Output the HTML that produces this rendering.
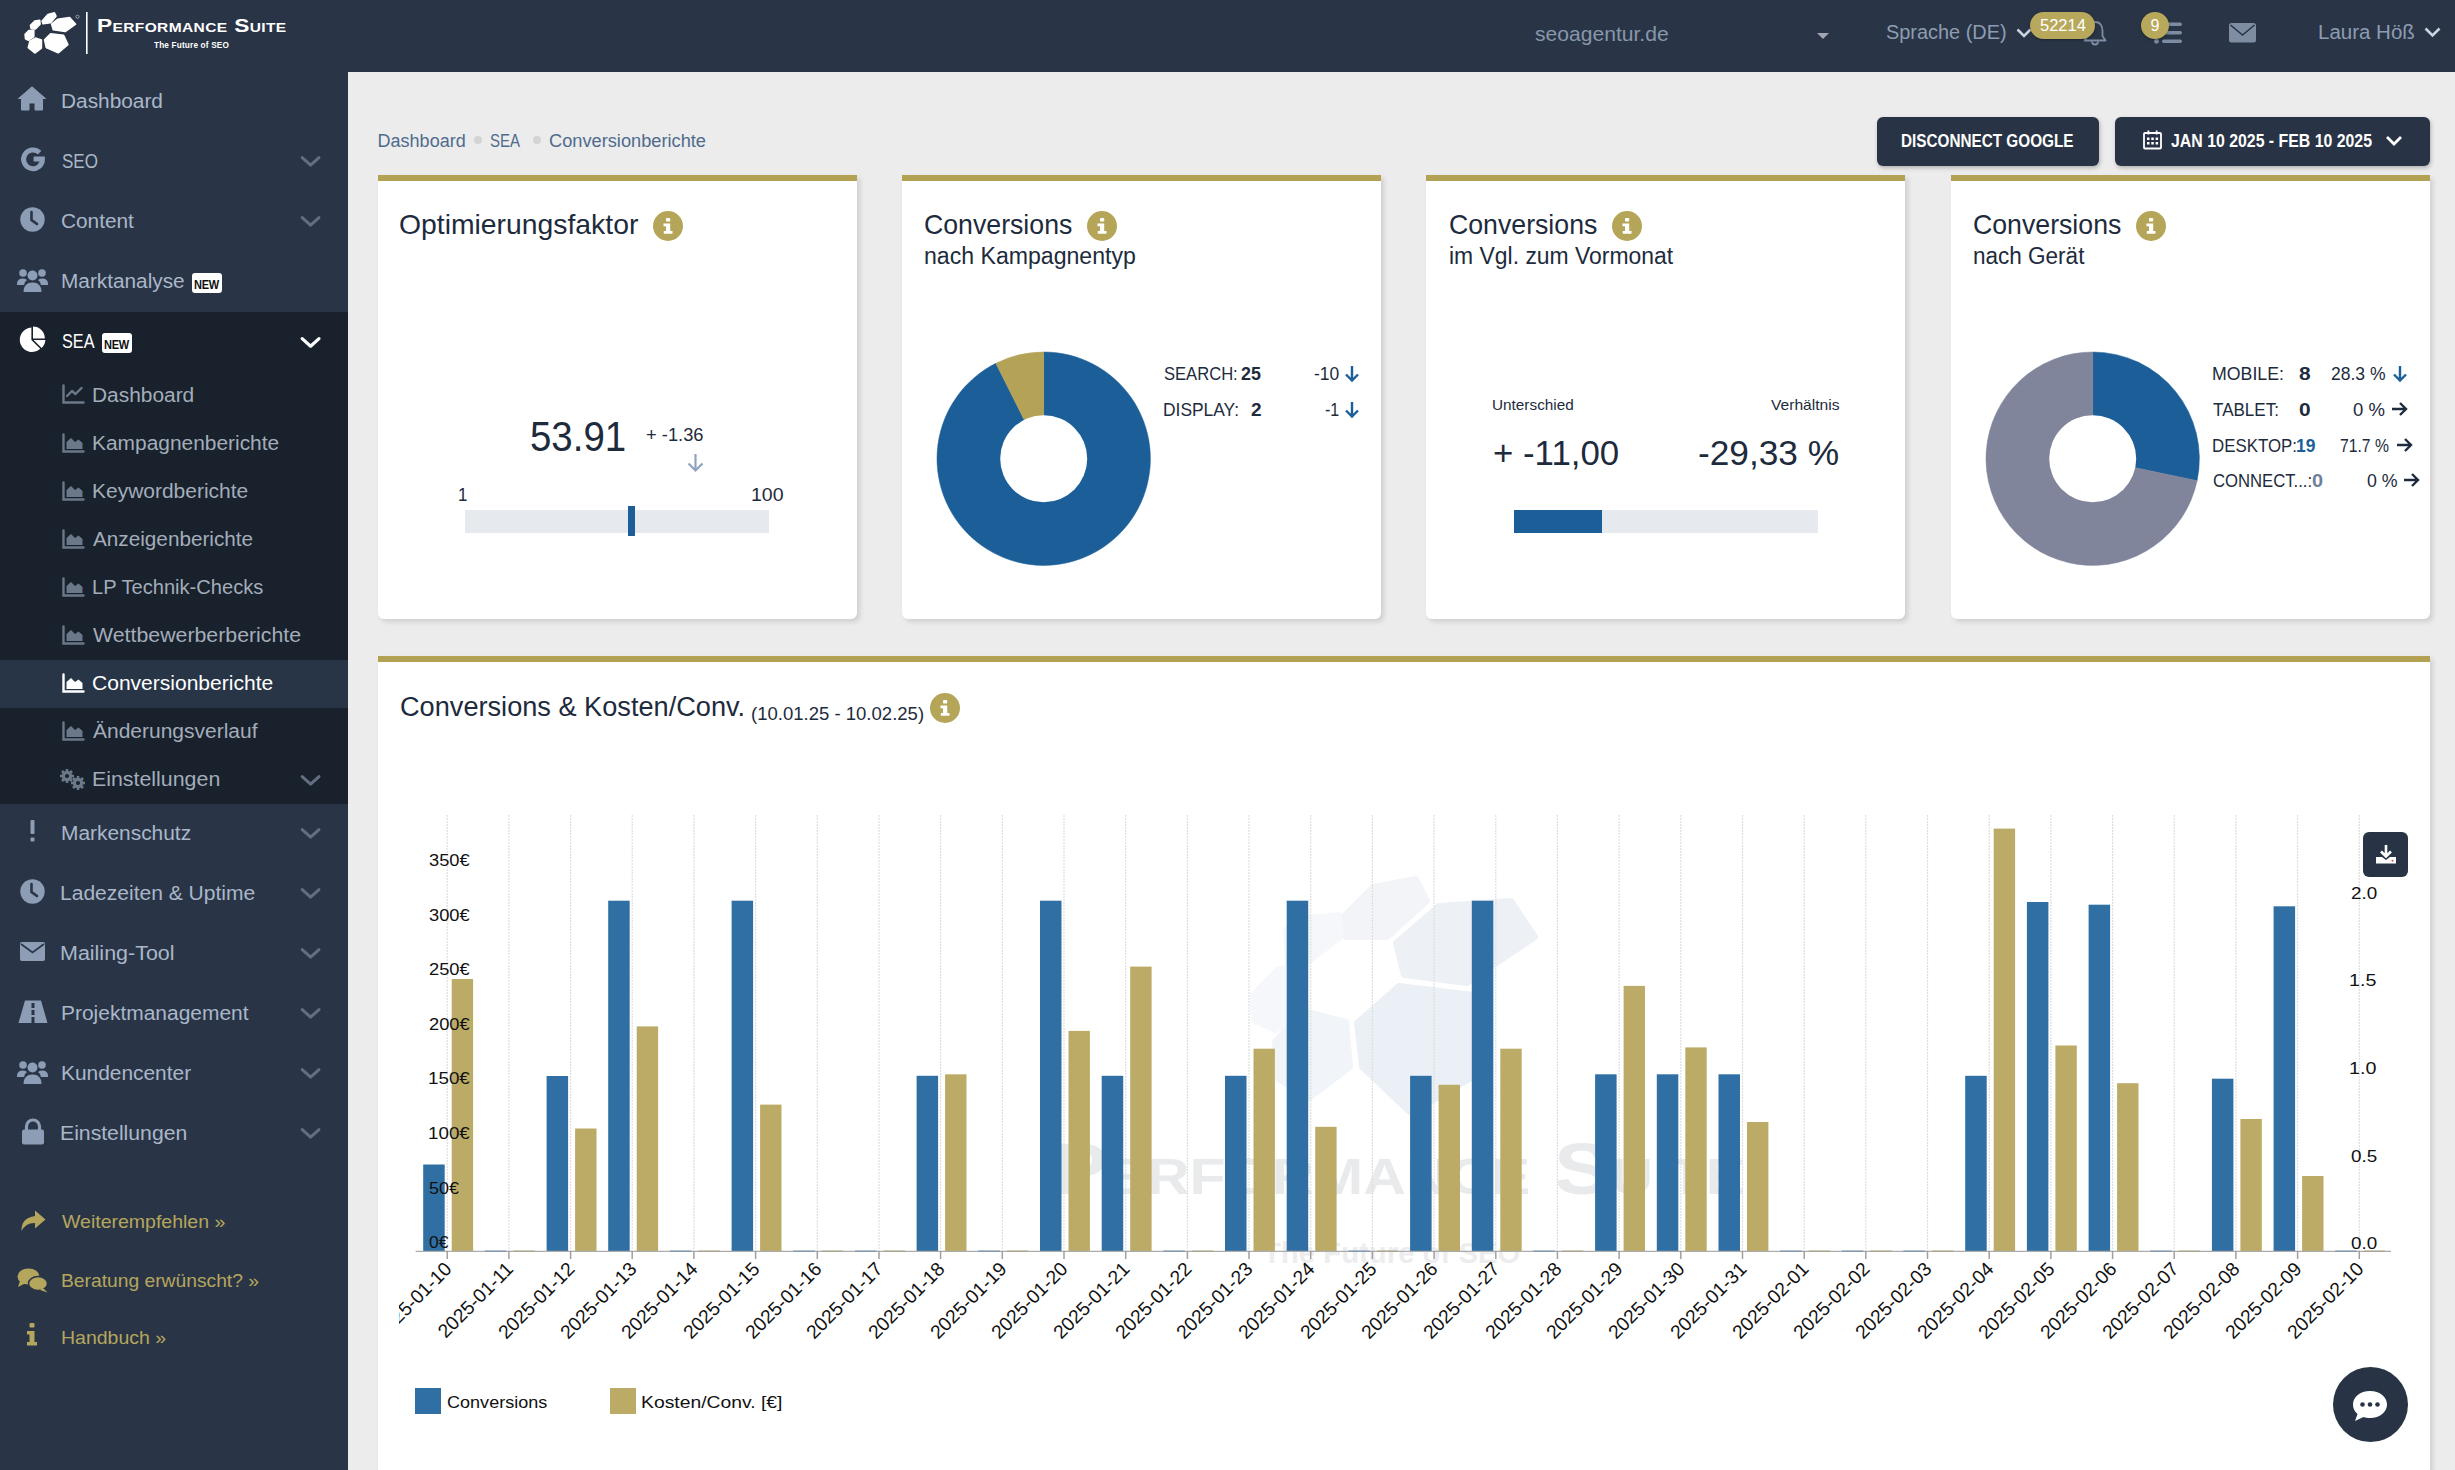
<!DOCTYPE html><html><head><meta charset="utf-8"><style>
*{margin:0;padding:0;box-sizing:border-box}
html,body{width:2455px;height:1470px;overflow:hidden;background:#ececec;font-family:"Liberation Sans",sans-serif}
.t{position:absolute;white-space:nowrap;line-height:1;transform-origin:0 50%}
.abs{position:absolute}
svg{position:absolute;overflow:visible}
</style></head><body>
<div class="abs" style="left:0;top:0;width:2455px;height:72px;background:#293546"></div><div class="abs" style="left:0;top:72px;width:348px;height:1398px;background:#293546"></div><div class="abs" style="left:0;top:312px;width:348px;height:492px;background:#18212c"></div><div class="abs" style="left:0;top:660px;width:348px;height:48px;background:#283546"></div><svg width="2455" height="72" style="left:0;top:0"><polygon points="42.2,21.0 47.9,14.5 54.4,12.9 56.0,16.2 50.6,22.7 43.0,23.8" fill="#fff" stroke="#fff" stroke-width="1.6" stroke-linejoin="round"/><polygon points="51.7,24.2 57.6,19.3 69.6,17.5 75.6,24.2 65.2,31.5 53.3,29.7" fill="#fff" stroke="#fff" stroke-width="1.6" stroke-linejoin="round"/><polygon points="30.5,25.3 34.8,21.0 39.7,20.2 40.1,24.2 35.4,28.9 31.0,28.1" fill="#fff" stroke="#fff" stroke-width="1.6" stroke-linejoin="round"/><polygon points="25.1,34.3 28.9,30.5 33.8,30.0 33.8,36.5 28.4,40.3 25.5,38.7" fill="#fff" stroke="#fff" stroke-width="1.6" stroke-linejoin="round"/><polygon points="28.3,47.6 29.9,41.1 35.4,38.1 41.4,40.0 41.4,48.1 34.8,53.0" fill="#fff" stroke="#fff" stroke-width="1.6" stroke-linejoin="round"/><polygon points="44.6,39.8 50.6,33.8 63.6,35.4 67.9,44.7 58.2,52.8 46.2,47.4" fill="#fff" stroke="#fff" stroke-width="1.6" stroke-linejoin="round"/><circle cx="77.5" cy="16.8" r="1.6" fill="none" stroke="#cfd5dd" stroke-width=".6"/><rect x="86" y="12" width="1.6" height="42" fill="#fff"/></svg><div id="t0" class="t " style="left:97.4px;top:15.8px;font-size:19px;transform:scaleX(1.1955);color:#fff;font-weight:bold;font-variant:small-caps;letter-spacing:0.3px">Performance Suite</div>
<div id="t1" class="t " style="left:154.1px;top:39.8px;font-size:9.5px;transform:scaleX(0.8641);color:#fff;font-weight:bold;letter-spacing:0.2px">The Future of SEO</div>
<div id="t2" class="t " style="left:1535.0px;top:23.2px;font-size:21px;transform:scaleX(1.0043);color:#8797ab">seoagentur.de</div>
<svg width="12" height="6" style="left:1817px;top:33px"><polygon points="0,0 12,0 6,6" fill="#a3a7ad"/></svg><div id="t3" class="t " style="left:1886.0px;top:22.1px;font-size:20px;transform:scaleX(0.9959);color:#8d9cb1">Sprache (DE)</div>
<svg width="16" height="10" style="left:2016px;top:27.5px"><polyline points="1.5,1.5 8,8 14.5,1.5" fill="none" stroke="#c9d3df" stroke-width="2.6"/></svg><svg width="26" height="28" style="left:2082px;top:19px"><path d="M13 3 C7.5 3 5.5 7.5 5.5 12 L5.5 17 L2.5 21.5 L23.5 21.5 L20.5 17 L20.5 12 C20.5 7.5 18.5 3 13 3 Z" fill="none" stroke="#7d8ca3" stroke-width="1.8" stroke-linejoin="round"/><path d="M10 22.5 A3 3 0 0 0 16 22.5" fill="none" stroke="#7d8ca3" stroke-width="1.8"/></svg><div class="abs" style="left:2030px;top:12px;width:65px;height:27px;border-radius:14px;background:#b8a85c;box-shadow:0 1px 3px rgba(0,0,0,.35)"></div><div id="t4" class="t " style="left:2039.5px;top:17.5px;font-size:16px;transform:scaleX(1.0315);color:#fff">52214</div>
<svg width="30" height="24" style="left:2153px;top:21px"><g fill="#7d8ca3"><rect x="9" y="1.5" width="20" height="3.6" rx="1.8"/><rect x="9" y="10" width="20" height="3.6" rx="1.8"/><rect x="9" y="18.5" width="20" height="3.6" rx="1.8"/><circle cx="3.5" cy="20.3" r="2.4"/></g></svg><div class="abs" style="left:2141px;top:12px;width:28px;height:27px;border-radius:50%;background:#b8a85c;box-shadow:0 1px 3px rgba(0,0,0,.35)"></div><div id="t5" class="t " style="left:2150.5px;top:17.5px;font-size:16px;color:#fff">9</div>
<svg width="28" height="20" style="left:2228.5px;top:22.5px"><rect x="0" y="0" width="27" height="19.5" rx="2.5" fill="#7f8da3"/><polyline points="1.5,2 13.5,12 25.5,2" fill="none" stroke="#293546" stroke-width="1.6"/></svg><div id="t6" class="t " style="left:2318.0px;top:22.1px;font-size:20px;transform:scaleX(1.0249);color:#8d9cb1">Laura Höß</div>
<svg width="18" height="11" style="left:2424px;top:27px"><polyline points="1.5,1.5 8.5,8.5 15.5,1.5" fill="none" stroke="#c9d3df" stroke-width="2.6"/></svg><div id="t7" class="t " style="left:61.0px;top:91.1px;font-size:20px;transform:scaleX(1.0416);color:#a9b7c9">Dashboard</div>
<div id="t8" class="t " style="left:62.0px;top:151.1px;font-size:20px;transform:scaleX(0.8517);color:#a9b7c9">SEO</div>
<svg width="22" height="13" style="left:300.3px;top:155.3px"><polyline points="2.2,2.6 10.6,10.2 19,2.6" fill="none" stroke="#636e80" stroke-width="3" stroke-linecap="round" stroke-linejoin="round"/></svg><div id="t9" class="t " style="left:61.0px;top:211.1px;font-size:20px;transform:scaleX(1.0404);color:#a9b7c9">Content</div>
<svg width="22" height="13" style="left:300.3px;top:215.3px"><polyline points="2.2,2.6 10.6,10.2 19,2.6" fill="none" stroke="#636e80" stroke-width="3" stroke-linecap="round" stroke-linejoin="round"/></svg><div id="t10" class="t " style="left:61.0px;top:271.1px;font-size:20px;transform:scaleX(1.0398);color:#a9b7c9">Marktanalyse</div>
<div class="abs" style="left:192px;top:273px;width:30px;height:20px;border-radius:3px;background:#fff"></div><div id="t11" class="t " style="left:193.7px;top:277.5px;font-size:13px;transform:scaleX(0.8493);color:#111;font-weight:bold;letter-spacing:-0.3px">NEW</div>
<div id="t12" class="t " style="left:62.0px;top:331.1px;font-size:20px;transform:scaleX(0.8112);color:#fff">SEA</div>
<div class="abs" style="left:102px;top:333px;width:30px;height:20px;border-radius:3px;background:#fff"></div><div id="t13" class="t " style="left:103.7px;top:337.5px;font-size:13px;transform:scaleX(0.8493);color:#111;font-weight:bold;letter-spacing:-0.3px">NEW</div>
<svg width="22" height="13" style="left:300.3px;top:336px"><polyline points="2.2,2.6 10.6,10.2 19,2.6" fill="none" stroke="#ffffff" stroke-width="3.2" stroke-linecap="round" stroke-linejoin="round"/></svg><div id="t14" class="t " style="left:91.8px;top:385.1px;font-size:20px;transform:scaleX(1.0447);color:#a3adba">Dashboard</div>
<div id="t15" class="t " style="left:91.8px;top:433.1px;font-size:20px;transform:scaleX(1.0456);color:#a3adba">Kampagnenberichte</div>
<div id="t16" class="t " style="left:91.8px;top:481.1px;font-size:20px;transform:scaleX(1.0484);color:#a3adba">Keywordberichte</div>
<div id="t17" class="t " style="left:92.8px;top:529.1px;font-size:20px;transform:scaleX(1.0361);color:#a3adba">Anzeigenberichte</div>
<div id="t18" class="t " style="left:91.8px;top:577.1px;font-size:20px;transform:scaleX(1.0048);color:#a3adba">LP Technik-Checks</div>
<div id="t19" class="t " style="left:92.8px;top:625.1px;font-size:20px;transform:scaleX(1.0658);color:#a3adba">Wettbewerberberichte</div>
<div id="t20" class="t " style="left:91.7px;top:673.1px;font-size:20px;transform:scaleX(1.0515);color:#fff">Conversionberichte</div>
<div id="t21" class="t " style="left:92.8px;top:721.1px;font-size:20px;transform:scaleX(1.0495);color:#a3adba">Änderungsverlauf</div>
<div id="t22" class="t " style="left:91.7px;top:769.1px;font-size:20px;transform:scaleX(1.0681);color:#a3adba">Einstellungen</div>
<svg width="22" height="13" style="left:300.3px;top:773.5px"><polyline points="2.2,2.6 10.6,10.2 19,2.6" fill="none" stroke="#636e80" stroke-width="3" stroke-linecap="round" stroke-linejoin="round"/></svg><div id="t23" class="t " style="left:60.5px;top:823.1px;font-size:20px;transform:scaleX(1.0450);color:#a9b7c9">Markenschutz</div>
<svg width="22" height="13" style="left:300.3px;top:827.3px"><polyline points="2.2,2.6 10.6,10.2 19,2.6" fill="none" stroke="#636e80" stroke-width="3" stroke-linecap="round" stroke-linejoin="round"/></svg><div id="t24" class="t " style="left:60.4px;top:883.1px;font-size:20px;transform:scaleX(1.0513);color:#a9b7c9">Ladezeiten &amp; Uptime</div>
<svg width="22" height="13" style="left:300.3px;top:887.3px"><polyline points="2.2,2.6 10.6,10.2 19,2.6" fill="none" stroke="#636e80" stroke-width="3" stroke-linecap="round" stroke-linejoin="round"/></svg><div id="t25" class="t " style="left:60.4px;top:943.1px;font-size:20px;transform:scaleX(1.0735);color:#a9b7c9">Mailing-Tool</div>
<svg width="22" height="13" style="left:300.3px;top:947.3px"><polyline points="2.2,2.6 10.6,10.2 19,2.6" fill="none" stroke="#636e80" stroke-width="3" stroke-linecap="round" stroke-linejoin="round"/></svg><div id="t26" class="t " style="left:60.5px;top:1003.1px;font-size:20px;transform:scaleX(1.0480);color:#a9b7c9">Projektmanagement</div>
<svg width="22" height="13" style="left:300.3px;top:1007.3px"><polyline points="2.2,2.6 10.6,10.2 19,2.6" fill="none" stroke="#636e80" stroke-width="3" stroke-linecap="round" stroke-linejoin="round"/></svg><div id="t27" class="t " style="left:60.5px;top:1063.1px;font-size:20px;transform:scaleX(1.0446);color:#a9b7c9">Kundencenter</div>
<svg width="22" height="13" style="left:300.3px;top:1067.3px"><polyline points="2.2,2.6 10.6,10.2 19,2.6" fill="none" stroke="#636e80" stroke-width="3" stroke-linecap="round" stroke-linejoin="round"/></svg><div id="t28" class="t " style="left:60.4px;top:1123.1px;font-size:20px;transform:scaleX(1.0596);color:#a9b7c9">Einstellungen</div>
<svg width="22" height="13" style="left:300.3px;top:1127.3px"><polyline points="2.2,2.6 10.6,10.2 19,2.6" fill="none" stroke="#636e80" stroke-width="3" stroke-linecap="round" stroke-linejoin="round"/></svg><div id="t29" class="t " style="left:61.5px;top:1212.3px;font-size:19px;transform:scaleX(1.0261);color:#b5a65d">Weiterempfehlen »</div>
<div id="t30" class="t " style="left:60.5px;top:1270.7px;font-size:19px;transform:scaleX(1.0132);color:#b5a65d">Beratung erwünscht? »</div>
<div id="t31" class="t " style="left:60.5px;top:1327.7px;font-size:19px;transform:scaleX(1.0258);color:#b5a65d">Handbuch »</div>
<svg width="30" height="26" style="left:18px;top:86px"><path d="M14 0.8 L27.5 12.5 L24.5 12.5 L24.5 24 L17 24 L17 17 L11 17 L11 24 L3.5 24 L3.5 12.5 L0.5 12.5 Z" fill="#8d9db5" stroke="#8d9db5" stroke-linejoin="round" stroke-width="1"/></svg><svg width="26" height="26" style="left:20.5px;top:147px"><path d="M18.6 5.6 A9.4 9.4 0 1 0 21.4 12 L12.6 12" fill="none" stroke="#8d9db5" stroke-width="5"/></svg><svg width="26" height="26" style="left:20px;top:207px"><circle cx="12.5" cy="12.5" r="12.2" fill="#8d9db5"/><polyline points="11.5,5 11.5,13 17,17" fill="none" stroke="#293546" stroke-width="2.6" stroke-linecap="round"/></svg><svg width="32" height="26" style="left:17px;top:268px"><g fill="#8d9db5"><circle cx="6" cy="5" r="3.8"/><circle cx="25" cy="5" r="3.8"/><circle cx="15.5" cy="7.5" r="5"/><path d="M0 16 Q0 10.5 6 10.5 Q9 10.5 10 12 Q7 14 7 17 L0 17 Z"/><path d="M31 16 Q31 10.5 25 10.5 Q22 10.5 21 12 Q24 14 24 17 L31 17 Z"/><path d="M6.5 24 Q6.5 14.5 15.5 14.5 Q24.5 14.5 24.5 24 Z"/></g></svg><svg width="28" height="28" style="left:19px;top:325px"><path d="M12.4 2.6 L12.4 15 L21.2 23.8 A12.2 12.2 0 1 1 12.4 2.6 Z" fill="#fff"/><path d="M14 1.6 A11.8 11.8 0 0 1 25.8 13.4 L14 13.4 Z" fill="#fff"/><path d="M14.6 15 L26.4 15 A12 12 0 0 1 22.6 23 Z" fill="#fff"/></svg><svg width="24" height="20" style="left:62px;top:385px"><path d="M1.5 0.5 L1.5 17.5 L21.5 17.5" fill="none" stroke="#6b7888" stroke-width="2.4" stroke-linecap="round"/><polyline points="5,11 10,6 13.5,9 19.5,3" fill="none" stroke="#6b7888" stroke-width="2.4" stroke-linecap="round" stroke-linejoin="round"/></svg><svg width="24" height="20" style="left:62px;top:433.5px"><path d="M1.5 0.5 L1.5 17.5 L21.5 17.5" fill="none" stroke="#6b7888" stroke-width="2.4" stroke-linecap="round"/><path d="M4.5 15 L4.5 8 L9 4 L13 8 L16.5 5.5 L20.5 9 L20.5 15 Z" fill="#6b7888"/></svg><svg width="24" height="20" style="left:62px;top:481.5px"><path d="M1.5 0.5 L1.5 17.5 L21.5 17.5" fill="none" stroke="#6b7888" stroke-width="2.4" stroke-linecap="round"/><path d="M4.5 15 L4.5 8 L9 4 L13 8 L16.5 5.5 L20.5 9 L20.5 15 Z" fill="#6b7888"/></svg><svg width="24" height="20" style="left:62px;top:529.5px"><path d="M1.5 0.5 L1.5 17.5 L21.5 17.5" fill="none" stroke="#6b7888" stroke-width="2.4" stroke-linecap="round"/><path d="M4.5 15 L4.5 8 L9 4 L13 8 L16.5 5.5 L20.5 9 L20.5 15 Z" fill="#6b7888"/></svg><svg width="24" height="20" style="left:62px;top:577.5px"><path d="M1.5 0.5 L1.5 17.5 L21.5 17.5" fill="none" stroke="#6b7888" stroke-width="2.4" stroke-linecap="round"/><path d="M4.5 15 L4.5 8 L9 4 L13 8 L16.5 5.5 L20.5 9 L20.5 15 Z" fill="#6b7888"/></svg><svg width="24" height="20" style="left:62px;top:625.5px"><path d="M1.5 0.5 L1.5 17.5 L21.5 17.5" fill="none" stroke="#6b7888" stroke-width="2.4" stroke-linecap="round"/><path d="M4.5 15 L4.5 8 L9 4 L13 8 L16.5 5.5 L20.5 9 L20.5 15 Z" fill="#6b7888"/></svg><svg width="24" height="20" style="left:62px;top:673.5px"><path d="M1.5 0.5 L1.5 17.5 L21.5 17.5" fill="none" stroke="#ffffff" stroke-width="2.4" stroke-linecap="round"/><path d="M4.5 15 L4.5 8 L9 4 L13 8 L16.5 5.5 L20.5 9 L20.5 15 Z" fill="#ffffff"/></svg><svg width="24" height="20" style="left:62px;top:721.5px"><path d="M1.5 0.5 L1.5 17.5 L21.5 17.5" fill="none" stroke="#6b7888" stroke-width="2.4" stroke-linecap="round"/><path d="M4.5 15 L4.5 8 L9 4 L13 8 L16.5 5.5 L20.5 9 L20.5 15 Z" fill="#6b7888"/></svg><svg width="28" height="22" style="left:59px;top:768px"><g fill="#6b7888"><circle cx="8" cy="8" r="5.2"/><circle cx="19" cy="15" r="5.2"/></g><g stroke="#6b7888" stroke-width="2.6"><line x1="8" y1="1" x2="8" y2="15"/><line x1="1" y1="8" x2="15" y2="8"/><line x1="3" y1="3" x2="13" y2="13"/><line x1="13" y1="3" x2="3" y2="13"/><line x1="19" y1="8" x2="19" y2="22"/><line x1="12" y1="15" x2="26" y2="15"/><line x1="14" y1="10" x2="24" y2="20"/><line x1="24" y1="10" x2="14" y2="20"/></g><circle cx="8" cy="8" r="2" fill="#19212b"/><circle cx="19" cy="15" r="2" fill="#19212b"/></svg><svg width="8" height="24" style="left:29px;top:820px"><rect x="1.5" y="0" width="4" height="14" rx="1" fill="#8d9db5"/><rect x="1.5" y="17.5" width="4" height="4" rx="1" fill="#8d9db5"/></svg><svg width="26" height="26" style="left:20px;top:879px"><circle cx="12.5" cy="12.5" r="12.2" fill="#8d9db5"/><polyline points="11.5,5 11.5,13 17,17" fill="none" stroke="#293546" stroke-width="2.6" stroke-linecap="round"/></svg><svg width="26" height="20" style="left:20px;top:942px"><rect x="0" y="0" width="25" height="19" rx="2" fill="#8d9db5"/><polyline points="1,2 12.5,10.5 24,2" fill="none" stroke="#293546" stroke-width="1.8"/></svg><svg width="30" height="24" style="left:18px;top:1000px"><path d="M7 0.5 L23 0.5 L29.5 23 L0.5 23 Z" fill="#8d9db5"/><rect x="13.5" y="3" width="3" height="5" fill="#293546"/><rect x="13.5" y="10" width="3" height="5" fill="#293546"/><rect x="13.5" y="17" width="3" height="6" fill="#293546"/></svg><svg width="32" height="26" style="left:17px;top:1060px"><g fill="#8d9db5"><circle cx="6" cy="5" r="3.8"/><circle cx="25" cy="5" r="3.8"/><circle cx="15.5" cy="7.5" r="5"/><path d="M0 16 Q0 10.5 6 10.5 Q9 10.5 10 12 Q7 14 7 17 L0 17 Z"/><path d="M31 16 Q31 10.5 25 10.5 Q22 10.5 21 12 Q24 14 24 17 L31 17 Z"/><path d="M6.5 24 Q6.5 14.5 15.5 14.5 Q24.5 14.5 24.5 24 Z"/></g></svg><svg width="24" height="26" style="left:21px;top:1119px"><path d="M5.5 11 L5.5 7.5 A6.5 6.5 0 0 1 18.5 7.5 L18.5 11" fill="none" stroke="#8d9db5" stroke-width="3.2"/><rect x="1" y="10.5" width="22" height="15" rx="2" fill="#8d9db5"/></svg><svg width="28" height="22" style="left:19px;top:1210px"><path d="M16 0.5 L26.5 9.5 L16 18.5 L16 13 Q7 12.5 2.5 21 Q2 8 16 6 Z" fill="#b5a65d"/></svg><svg width="32" height="26" style="left:17px;top:1268px"><ellipse cx="11.5" cy="8.5" rx="11" ry="8" fill="#b5a65d"/><path d="M3 13 L1 19 L9 15 Z" fill="#b5a65d"/><ellipse cx="21" cy="15.5" rx="9.5" ry="7" fill="#b5a65d" stroke="#293546" stroke-width="1.5"/><path d="M26 20 L30.5 24.5 L23 22 Z" fill="#b5a65d"/></svg><svg width="12" height="26" style="left:26px;top:1323px"><rect x="3.5" y="0" width="5" height="4.5" rx="1" fill="#b5a65d"/><path d="M1 8 L8.5 8 L8.5 19 L11 19 L11 22.5 L1 22.5 L1 19 L3.5 19 L3.5 11.5 L1 11.5 Z" fill="#b5a65d"/></svg><div id="t32" class="t " style="left:377.6px;top:132.2px;font-size:18px;color:#4f6b8c">Dashboard</div>
<div class="abs" style="left:474px;top:136px;width:8px;height:8px;border-radius:50%;background:#d4d4d4"></div><div id="t33" class="t " style="left:490.0px;top:132.2px;font-size:18px;transform:scaleX(0.8331);color:#4f6b8c">SEA</div>
<div class="abs" style="left:533px;top:136px;width:8px;height:8px;border-radius:50%;background:#d4d4d4"></div><div id="t34" class="t " style="left:549.4px;top:132.2px;font-size:18px;transform:scaleX(1.0124);color:#4f6b8c">Conversionberichte</div>
<div class="abs" style="left:1876.5px;top:116.5px;width:222px;height:49px;border-radius:6px;background:#283445;box-shadow:1px 2px 4px rgba(0,0,0,.25)"></div><div id="t35" class="t " style="left:1900.9px;top:132.2px;font-size:18px;transform:scaleX(0.8495);color:#fff;font-weight:bold">DISCONNECT GOOGLE</div>
<div class="abs" style="left:2114.5px;top:116.5px;width:315px;height:49px;border-radius:6px;background:#283445;box-shadow:1px 2px 4px rgba(0,0,0,.25)"></div><svg width="20" height="20" style="left:2143px;top:129.5px"><rect x="1" y="3" width="17" height="15.5" rx="1" fill="none" stroke="#fff" stroke-width="1.8"/><rect x="4.5" y="0.5" width="1.8" height="4" fill="#fff"/><rect x="12.8" y="0.5" width="1.8" height="4" fill="#fff"/><g fill="#fff"><rect x="4" y="7.5" width="2.5" height="2.5"/><rect x="8.3" y="7.5" width="2.5" height="2.5"/><rect x="12.6" y="7.5" width="2.5" height="2.5"/><rect x="4" y="12" width="2.5" height="2.5"/><rect x="8.3" y="12" width="2.5" height="2.5"/><rect x="12.6" y="12" width="2.5" height="2.5"/></g></svg><div id="t36" class="t " style="left:2171.4px;top:132.2px;font-size:18px;transform:scaleX(0.8811);color:#fff;font-weight:bold">JAN 10 2025 - FEB 10 2025</div>
<svg width="18" height="11" style="left:2385px;top:135px"><polyline points="2,2 9,9 16,2" fill="none" stroke="#fff" stroke-width="2.8"/></svg><div class="abs" style="left:378px;top:175px;width:479px;height:444px;background:#fff;border-top:6px solid #b3a254;border-radius:0 0 6px 6px;box-shadow:3px 3px 5px rgba(0,0,0,.12)"></div><div class="abs" style="left:902px;top:175px;width:479px;height:444px;background:#fff;border-top:6px solid #b3a254;border-radius:0 0 6px 6px;box-shadow:3px 3px 5px rgba(0,0,0,.12)"></div><div class="abs" style="left:1426px;top:175px;width:479px;height:444px;background:#fff;border-top:6px solid #b3a254;border-radius:0 0 6px 6px;box-shadow:3px 3px 5px rgba(0,0,0,.12)"></div><div class="abs" style="left:1951px;top:175px;width:479px;height:444px;background:#fff;border-top:6px solid #b3a254;border-radius:0 0 6px 6px;box-shadow:3px 3px 5px rgba(0,0,0,.12)"></div><div class="abs" style="left:378px;top:656px;width:2052px;height:900px;background:#fff;border-top:6px solid #b3a254;box-shadow:3px 3px 5px rgba(0,0,0,.12)"></div><div id="t37" class="t " style="left:399.3px;top:211.1px;font-size:28px;transform:scaleX(1.0118);color:#1d2b3c">Optimierungsfaktor</div>
<svg width="31" height="31" style="left:653px;top:210.7px"><circle cx="15" cy="15" r="15" fill="#b5a558"/><g fill="#fff"><rect x="13" y="7" width="4.2" height="3.6" rx=".8"/><path d="M10.5 12.5 L17.2 12.5 L17.2 20 L19.5 20 L19.5 22.8 L10.8 22.8 L10.8 20 L13 20 L13 15.3 L10.5 15.3 Z"/></g></svg><div id="t38" class="t " style="left:924.4px;top:211.1px;font-size:28px;transform:scaleX(0.9530);color:#1d2b3c">Conversions</div>
<div id="t39" class="t " style="left:924.4px;top:244.5px;font-size:23px;transform:scaleX(1.0038);color:#1d2b3c">nach Kampagnentyp</div>
<div id="t40" class="t " style="left:1448.7px;top:211.1px;font-size:28px;transform:scaleX(0.9530);color:#1d2b3c">Conversions</div>
<div id="t41" class="t " style="left:1448.7px;top:244.5px;font-size:23px;transform:scaleX(0.9961);color:#1d2b3c">im Vgl. zum Vormonat</div>
<div id="t42" class="t " style="left:1972.8px;top:211.1px;font-size:28px;transform:scaleX(0.9530);color:#1d2b3c">Conversions</div>
<div id="t43" class="t " style="left:1972.8px;top:244.5px;font-size:23px;transform:scaleX(0.9789);color:#1d2b3c">nach Gerät</div>
<svg width="31" height="31" style="left:1087px;top:210.7px"><circle cx="15" cy="15" r="15" fill="#b5a558"/><g fill="#fff"><rect x="13" y="7" width="4.2" height="3.6" rx=".8"/><path d="M10.5 12.5 L17.2 12.5 L17.2 20 L19.5 20 L19.5 22.8 L10.8 22.8 L10.8 20 L13 20 L13 15.3 L10.5 15.3 Z"/></g></svg><svg width="31" height="31" style="left:1611.5px;top:210.7px"><circle cx="15" cy="15" r="15" fill="#b5a558"/><g fill="#fff"><rect x="13" y="7" width="4.2" height="3.6" rx=".8"/><path d="M10.5 12.5 L17.2 12.5 L17.2 20 L19.5 20 L19.5 22.8 L10.8 22.8 L10.8 20 L13 20 L13 15.3 L10.5 15.3 Z"/></g></svg><svg width="31" height="31" style="left:2136px;top:210.7px"><circle cx="15" cy="15" r="15" fill="#b5a558"/><g fill="#fff"><rect x="13" y="7" width="4.2" height="3.6" rx=".8"/><path d="M10.5 12.5 L17.2 12.5 L17.2 20 L19.5 20 L19.5 22.8 L10.8 22.8 L10.8 20 L13 20 L13 15.3 L10.5 15.3 Z"/></g></svg><div id="t44" class="t " style="left:530.1px;top:416.0px;font-size:42px;transform:scaleX(0.9149);color:#1d2b3c">53.91</div>
<div id="t45" class="t " style="left:646.0px;top:424.6px;font-size:19px;transform:scaleX(0.9642);color:#1d2b3c">+ -1.36</div>
<svg width="20" height="20" style="left:686px;top:453px"><path d="M9.5 1 L9.5 17.5 M2.5 10.5 L9.5 17.5 L16.5 10.5" fill="none" stroke="#8fa3bd" stroke-width="2.2"/></svg><div id="t46" class="t " style="left:458.1px;top:484.6px;font-size:19px;transform:scaleX(0.8889);color:#1d2b3c">1</div>
<div id="t47" class="t " style="left:751.0px;top:484.6px;font-size:19px;transform:scaleX(1.0287);color:#1d2b3c">100</div>
<div class="abs" style="left:465px;top:510px;width:304px;height:23px;background:#e6eaee"></div><div class="abs" style="left:628px;top:506px;width:7px;height:30px;background:#1b5e98"></div><svg width="217.4" height="217.4" style="left:934.5999999999999px;top:350.3px"><path d="M108.7,108.7 L108.70,2.00 A106.7,106.7 0 1 1 60.81,13.35 Z" fill="#1b5e98" stroke="#1b5e98" stroke-width=".5"/><path d="M108.7,108.7 L60.81,13.35 A106.7,106.7 0 0 1 108.70,2.00 Z" fill="#b4a356" stroke="#b4a356" stroke-width=".5"/><circle cx="108.7" cy="108.7" r="43.5" fill="#fff"/></svg><svg width="217.4" height="217.4" style="left:1983.7px;top:350.3px"><path d="M108.7,108.7 L108.70,2.00 A106.7,106.7 0 0 1 213.11,130.67 Z" fill="#1b5e98" stroke="#1b5e98" stroke-width=".5"/><path d="M108.7,108.7 L213.11,130.67 A106.7,106.7 0 1 1 108.70,2.00 Z" fill="#80859b" stroke="#80859b" stroke-width=".5"/><circle cx="108.7" cy="108.7" r="43.5" fill="#fff"/></svg><div id="t48" class="t " style="left:1163.5px;top:364.2px;font-size:19px;transform:scaleX(0.8728);color:#1d2b3c">SEARCH:</div>
<div id="t49" class="t " style="left:1240.7px;top:364.2px;font-size:19px;transform:scaleX(0.9413);color:#1d2b3c;font-weight:bold">25</div>
<div id="t50" class="t " style="left:1314.0px;top:364.2px;font-size:19px;transform:scaleX(0.9184);color:#1d2b3c">-10</div>
<svg width="18" height="18" style="left:1343.5px;top:365px"><path d="M8 1 L8 15.5 M2 9.5 L8 15.5 L14 9.5" fill="none" stroke="#1b5e98" stroke-width="2.4"/></svg><div id="t51" class="t " style="left:1162.6px;top:400.1px;font-size:19px;transform:scaleX(0.9158);color:#1d2b3c">DISPLAY:</div>
<div id="t52" class="t " style="left:1251.0px;top:400.1px;font-size:19px;color:#1d2b3c;font-weight:bold">2</div>
<div id="t53" class="t " style="left:1325.0px;top:400.1px;font-size:19px;transform:scaleX(0.8391);color:#1d2b3c">-1</div>
<svg width="18" height="18" style="left:1343.5px;top:401px"><path d="M8 1 L8 15.5 M2 9.5 L8 15.5 L14 9.5" fill="none" stroke="#1b5e98" stroke-width="2.4"/></svg><div id="t54" class="t " style="left:1491.9px;top:396.7px;font-size:15px;transform:scaleX(1.0216);color:#1d2b3c">Unterschied</div>
<div id="t55" class="t " style="left:1771.4px;top:396.7px;font-size:15px;transform:scaleX(1.0402);color:#1d2b3c">Verhältnis</div>
<div id="t56" class="t " style="left:1493.0px;top:434.5px;font-size:35px;transform:scaleX(0.9949);color:#1d2b3c">+ -11,00</div>
<div id="t57" class="t " style="left:1698.4px;top:434.5px;font-size:35px;transform:scaleX(1.0075);color:#1d2b3c">-29,33 %</div>
<div class="abs" style="left:1514px;top:510px;width:304px;height:23px;background:#e6eaee"></div><div class="abs" style="left:1514px;top:510px;width:88px;height:23px;background:#1b5e98"></div><div id="t58" class="t " style="left:2211.6px;top:364.2px;font-size:19px;transform:scaleX(0.9332);color:#1d2b3c">MOBILE:</div>
<div id="t59" class="t " style="left:2298.6px;top:364.2px;font-size:19px;transform:scaleX(1.1000);color:#1d2b3c;font-weight:bold">8</div>
<div id="t60" class="t " style="left:2331.4px;top:364.2px;font-size:19px;transform:scaleX(0.9214);color:#1d2b3c">28.3 %</div>
<svg width="18" height="18" style="left:2392.4px;top:365.3px"><path d="M8 1 L8 15.5 M2 9.5 L8 15.5 L14 9.5" fill="none" stroke="#1b5e98" stroke-width="2.4"/></svg><div id="t61" class="t " style="left:2212.5px;top:400.1px;font-size:19px;transform:scaleX(0.8965);color:#1d2b3c">TABLET:</div>
<div id="t62" class="t " style="left:2299.0px;top:400.1px;font-size:19px;transform:scaleX(1.1000);color:#1d2b3c;font-weight:bold">0</div>
<div id="t63" class="t " style="left:2353.0px;top:400.1px;font-size:19px;transform:scaleX(0.9743);color:#1d2b3c">0 %</div>
<svg width="18" height="18" style="left:2391px;top:401.2px"><path d="M1 8 L15 8 M9 2 L15 8 L9 14" fill="none" stroke="#1d2b3c" stroke-width="2.4"/></svg><div id="t64" class="t " style="left:2211.6px;top:435.5px;font-size:19px;transform:scaleX(0.8881);color:#1d2b3c">DESKTOP:</div>
<div id="t65" class="t " style="left:2296.1px;top:435.5px;font-size:19px;transform:scaleX(0.9199);color:#1b5e98;font-weight:bold">19</div>
<div id="t66" class="t " style="left:2339.9px;top:435.5px;font-size:19px;transform:scaleX(0.8269);color:#1d2b3c">71.7 %</div>
<svg width="18" height="18" style="left:2396px;top:436.6px"><path d="M1 8 L15 8 M9 2 L15 8 L9 14" fill="none" stroke="#1d2b3c" stroke-width="2.4"/></svg><div id="t67" class="t " style="left:2212.5px;top:470.5px;font-size:19px;transform:scaleX(0.8776);color:#1d2b3c">CONNECT...:</div>
<div id="t68" class="t " style="left:2311.7px;top:470.5px;font-size:19px;transform:scaleX(1.0500);color:#6d8099;font-weight:bold">0</div>
<div id="t69" class="t " style="left:2366.5px;top:470.5px;font-size:19px;transform:scaleX(0.9347);color:#1d2b3c">0 %</div>
<svg width="18" height="18" style="left:2403.4px;top:471.6px"><path d="M1 8 L15 8 M9 2 L15 8 L9 14" fill="none" stroke="#1d2b3c" stroke-width="2.4"/></svg><div id="t70" class="t " style="left:399.6px;top:693.8px;font-size:27px;transform:scaleX(1.0057);color:#1d2b3c">Conversions &amp; Kosten/Conv.</div>
<div id="t71" class="t " style="left:750.5px;top:705.1px;font-size:18px;transform:scaleX(1.0294);color:#1d2b3c">(10.01.25 - 10.02.25)</div>
<svg width="31" height="31" style="left:930px;top:693px"><circle cx="15" cy="15" r="15" fill="#b5a558"/><g fill="#fff"><rect x="13" y="7" width="4.2" height="3.6" rx=".8"/><path d="M10.5 12.5 L17.2 12.5 L17.2 20 L19.5 20 L19.5 22.8 L10.8 22.8 L10.8 20 L13 20 L13 15.3 L10.5 15.3 Z"/></g></svg><svg width="2455" height="1470" style="left:0;top:0"><polygon points="1345,915 1373,887 1416,879 1427,901 1387,937 1346,937" fill="#f2f4f8" stroke="#f2f4f8" stroke-width="6" stroke-linejoin="round"/><polygon points="1396,943 1439,906 1511,901 1535,937 1467,983 1404,975" fill="#edf1f6" stroke="#edf1f6" stroke-width="6" stroke-linejoin="round"/><polygon points="1286,930 1310,918 1339,915 1340,937 1310,960 1288,965" fill="#f5f7fa" stroke="#f5f7fa" stroke-width="6" stroke-linejoin="round"/><polygon points="1253,995 1277,970 1298,965 1300,1012 1275,1030 1254,1020" fill="#f5f7fa" stroke="#f5f7fa" stroke-width="6" stroke-linejoin="round"/><polygon points="1275,1042 1303,1011 1346,1022 1350,1067 1309,1098 1278,1079" fill="#f1f4f8" stroke="#f1f4f8" stroke-width="6" stroke-linejoin="round"/><polygon points="1357,1023 1399,986 1473,995 1480,1073 1411,1113 1362,1067" fill="#ebeff6" stroke="#ebeff6" stroke-width="6" stroke-linejoin="round"/></svg><div id="t72" class="t " style="left:1050.8px;top:1132.8px;font-size:72px;transform:scaleX(1.1797);color:#e9eaec;font-weight:bold;font-variant:small-caps">Performance Suite</div>
<div id="t73" class="t " style="left:1263.0px;top:1237.6px;font-size:30px;transform:scaleX(0.9772);color:#ededef;font-weight:bold">The Future of SEO</div>
<svg width="2455" height="1470" style="left:0;top:0"><line x1="447.2" y1="815" x2="447.2" y2="1251" stroke="#dedede" stroke-width="1.2" stroke-dasharray="2 1"/><line x1="508.9" y1="815" x2="508.9" y2="1251" stroke="#dedede" stroke-width="1.2" stroke-dasharray="2 1"/><line x1="570.6" y1="815" x2="570.6" y2="1251" stroke="#dedede" stroke-width="1.2" stroke-dasharray="2 1"/><line x1="632.2" y1="815" x2="632.2" y2="1251" stroke="#dedede" stroke-width="1.2" stroke-dasharray="2 1"/><line x1="693.9" y1="815" x2="693.9" y2="1251" stroke="#dedede" stroke-width="1.2" stroke-dasharray="2 1"/><line x1="755.6" y1="815" x2="755.6" y2="1251" stroke="#dedede" stroke-width="1.2" stroke-dasharray="2 1"/><line x1="817.3" y1="815" x2="817.3" y2="1251" stroke="#dedede" stroke-width="1.2" stroke-dasharray="2 1"/><line x1="879.0" y1="815" x2="879.0" y2="1251" stroke="#dedede" stroke-width="1.2" stroke-dasharray="2 1"/><line x1="940.6" y1="815" x2="940.6" y2="1251" stroke="#dedede" stroke-width="1.2" stroke-dasharray="2 1"/><line x1="1002.3" y1="815" x2="1002.3" y2="1251" stroke="#dedede" stroke-width="1.2" stroke-dasharray="2 1"/><line x1="1064.0" y1="815" x2="1064.0" y2="1251" stroke="#dedede" stroke-width="1.2" stroke-dasharray="2 1"/><line x1="1125.7" y1="815" x2="1125.7" y2="1251" stroke="#dedede" stroke-width="1.2" stroke-dasharray="2 1"/><line x1="1187.4" y1="815" x2="1187.4" y2="1251" stroke="#dedede" stroke-width="1.2" stroke-dasharray="2 1"/><line x1="1249.0" y1="815" x2="1249.0" y2="1251" stroke="#dedede" stroke-width="1.2" stroke-dasharray="2 1"/><line x1="1310.7" y1="815" x2="1310.7" y2="1251" stroke="#dedede" stroke-width="1.2" stroke-dasharray="2 1"/><line x1="1372.4" y1="815" x2="1372.4" y2="1251" stroke="#dedede" stroke-width="1.2" stroke-dasharray="2 1"/><line x1="1434.1" y1="815" x2="1434.1" y2="1251" stroke="#dedede" stroke-width="1.2" stroke-dasharray="2 1"/><line x1="1495.8" y1="815" x2="1495.8" y2="1251" stroke="#dedede" stroke-width="1.2" stroke-dasharray="2 1"/><line x1="1557.4" y1="815" x2="1557.4" y2="1251" stroke="#dedede" stroke-width="1.2" stroke-dasharray="2 1"/><line x1="1619.1" y1="815" x2="1619.1" y2="1251" stroke="#dedede" stroke-width="1.2" stroke-dasharray="2 1"/><line x1="1680.8" y1="815" x2="1680.8" y2="1251" stroke="#dedede" stroke-width="1.2" stroke-dasharray="2 1"/><line x1="1742.5" y1="815" x2="1742.5" y2="1251" stroke="#dedede" stroke-width="1.2" stroke-dasharray="2 1"/><line x1="1804.2" y1="815" x2="1804.2" y2="1251" stroke="#dedede" stroke-width="1.2" stroke-dasharray="2 1"/><line x1="1865.8" y1="815" x2="1865.8" y2="1251" stroke="#dedede" stroke-width="1.2" stroke-dasharray="2 1"/><line x1="1927.5" y1="815" x2="1927.5" y2="1251" stroke="#dedede" stroke-width="1.2" stroke-dasharray="2 1"/><line x1="1989.2" y1="815" x2="1989.2" y2="1251" stroke="#dedede" stroke-width="1.2" stroke-dasharray="2 1"/><line x1="2050.9" y1="815" x2="2050.9" y2="1251" stroke="#dedede" stroke-width="1.2" stroke-dasharray="2 1"/><line x1="2112.6" y1="815" x2="2112.6" y2="1251" stroke="#dedede" stroke-width="1.2" stroke-dasharray="2 1"/><line x1="2174.2" y1="815" x2="2174.2" y2="1251" stroke="#dedede" stroke-width="1.2" stroke-dasharray="2 1"/><line x1="2235.9" y1="815" x2="2235.9" y2="1251" stroke="#dedede" stroke-width="1.2" stroke-dasharray="2 1"/><line x1="2297.6" y1="815" x2="2297.6" y2="1251" stroke="#dedede" stroke-width="1.2" stroke-dasharray="2 1"/><line x1="2359.3" y1="815" x2="2359.3" y2="1251" stroke="#dedede" stroke-width="1.2" stroke-dasharray="2 1"/><rect x="423.2" y="1164.5" width="21.5" height="86.5" fill="#306fa3"/><rect x="451.7" y="979" width="21.4" height="272.0" fill="#bcab67"/><rect x="546.6" y="1076" width="21.5" height="175.0" fill="#306fa3"/><rect x="575.1" y="1128.5" width="21.4" height="122.5" fill="#bcab67"/><rect x="608.2" y="900.7" width="21.5" height="350.3" fill="#306fa3"/><rect x="636.7" y="1026.4" width="21.4" height="224.6" fill="#bcab67"/><rect x="731.6" y="900.7" width="21.5" height="350.3" fill="#306fa3"/><rect x="760.1" y="1104.6" width="21.4" height="146.4" fill="#bcab67"/><rect x="916.6" y="1075.8" width="21.5" height="175.2" fill="#306fa3"/><rect x="945.1" y="1074.3" width="21.4" height="176.7" fill="#bcab67"/><rect x="1040.0" y="900.7" width="21.5" height="350.3" fill="#306fa3"/><rect x="1068.5" y="1030.9" width="21.4" height="220.1" fill="#bcab67"/><rect x="1101.7" y="1075.8" width="21.5" height="175.2" fill="#306fa3"/><rect x="1130.2" y="966.6" width="21.4" height="284.4" fill="#bcab67"/><rect x="1225.0" y="1075.8" width="21.5" height="175.2" fill="#306fa3"/><rect x="1253.5" y="1048.7" width="21.4" height="202.3" fill="#bcab67"/><rect x="1286.7" y="900.7" width="21.5" height="350.3" fill="#306fa3"/><rect x="1315.2" y="1126.8" width="21.4" height="124.2" fill="#bcab67"/><rect x="1410.1" y="1075.8" width="21.5" height="175.2" fill="#306fa3"/><rect x="1438.6" y="1084.8" width="21.4" height="166.2" fill="#bcab67"/><rect x="1471.8" y="900.7" width="21.5" height="350.3" fill="#306fa3"/><rect x="1500.3" y="1048.7" width="21.4" height="202.3" fill="#bcab67"/><rect x="1595.1" y="1074.3" width="21.5" height="176.7" fill="#306fa3"/><rect x="1623.6" y="985.9" width="21.4" height="265.1" fill="#bcab67"/><rect x="1656.8" y="1074.3" width="21.5" height="176.7" fill="#306fa3"/><rect x="1685.3" y="1047.4" width="21.4" height="203.6" fill="#bcab67"/><rect x="1718.5" y="1074.3" width="21.5" height="176.7" fill="#306fa3"/><rect x="1747.0" y="1122" width="21.4" height="129.0" fill="#bcab67"/><rect x="1965.2" y="1075.8" width="21.5" height="175.2" fill="#306fa3"/><rect x="1993.7" y="828.6" width="21.4" height="422.4" fill="#bcab67"/><rect x="2026.9" y="902" width="21.5" height="349.0" fill="#306fa3"/><rect x="2055.4" y="1045.5" width="21.4" height="205.5" fill="#bcab67"/><rect x="2088.6" y="904.7" width="21.5" height="346.3" fill="#306fa3"/><rect x="2117.1" y="1083.2" width="21.4" height="167.8" fill="#bcab67"/><rect x="2211.9" y="1078.7" width="21.5" height="172.3" fill="#306fa3"/><rect x="2240.4" y="1119" width="21.4" height="132.0" fill="#bcab67"/><rect x="2273.6" y="906.3" width="21.5" height="344.7" fill="#306fa3"/><rect x="2302.1" y="1176" width="21.4" height="75.0" fill="#bcab67"/><line x1="415.6" y1="1251.4" x2="2391" y2="1251.4" stroke="#acacac" stroke-width="1.3"/><rect x="484.9" y="1250.5" width="21.5" height="1.3" fill="#7d95ad"/><rect x="513.4" y="1250.5" width="21.4" height="1.3" fill="#aca68d"/><rect x="669.9" y="1250.5" width="21.5" height="1.3" fill="#7d95ad"/><rect x="698.4" y="1250.5" width="21.4" height="1.3" fill="#aca68d"/><rect x="793.3" y="1250.5" width="21.5" height="1.3" fill="#7d95ad"/><rect x="821.8" y="1250.5" width="21.4" height="1.3" fill="#aca68d"/><rect x="855.0" y="1250.5" width="21.5" height="1.3" fill="#7d95ad"/><rect x="883.5" y="1250.5" width="21.4" height="1.3" fill="#aca68d"/><rect x="978.3" y="1250.5" width="21.5" height="1.3" fill="#7d95ad"/><rect x="1006.8" y="1250.5" width="21.4" height="1.3" fill="#aca68d"/><rect x="1163.4" y="1250.5" width="21.5" height="1.3" fill="#7d95ad"/><rect x="1191.9" y="1250.5" width="21.4" height="1.3" fill="#aca68d"/><rect x="1348.4" y="1250.5" width="21.5" height="1.3" fill="#7d95ad"/><rect x="1376.9" y="1250.5" width="21.4" height="1.3" fill="#aca68d"/><rect x="1533.4" y="1250.5" width="21.5" height="1.3" fill="#7d95ad"/><rect x="1561.9" y="1250.5" width="21.4" height="1.3" fill="#aca68d"/><rect x="1780.2" y="1250.5" width="21.5" height="1.3" fill="#7d95ad"/><rect x="1808.7" y="1250.5" width="21.4" height="1.3" fill="#aca68d"/><rect x="1841.8" y="1250.5" width="21.5" height="1.3" fill="#7d95ad"/><rect x="1870.3" y="1250.5" width="21.4" height="1.3" fill="#aca68d"/><rect x="1903.5" y="1250.5" width="21.5" height="1.3" fill="#7d95ad"/><rect x="1932.0" y="1250.5" width="21.4" height="1.3" fill="#aca68d"/><rect x="2150.2" y="1250.5" width="21.5" height="1.3" fill="#7d95ad"/><rect x="2178.7" y="1250.5" width="21.4" height="1.3" fill="#aca68d"/><rect x="2335.3" y="1250.5" width="21.5" height="1.3" fill="#7d95ad"/><rect x="2363.8" y="1250.5" width="21.4" height="1.3" fill="#aca68d"/><line x1="447.2" y1="1251" x2="447.2" y2="1259" stroke="#a0a0a0" stroke-width="1.5"/><line x1="508.9" y1="1251" x2="508.9" y2="1259" stroke="#a0a0a0" stroke-width="1.5"/><line x1="570.6" y1="1251" x2="570.6" y2="1259" stroke="#a0a0a0" stroke-width="1.5"/><line x1="632.2" y1="1251" x2="632.2" y2="1259" stroke="#a0a0a0" stroke-width="1.5"/><line x1="693.9" y1="1251" x2="693.9" y2="1259" stroke="#a0a0a0" stroke-width="1.5"/><line x1="755.6" y1="1251" x2="755.6" y2="1259" stroke="#a0a0a0" stroke-width="1.5"/><line x1="817.3" y1="1251" x2="817.3" y2="1259" stroke="#a0a0a0" stroke-width="1.5"/><line x1="879.0" y1="1251" x2="879.0" y2="1259" stroke="#a0a0a0" stroke-width="1.5"/><line x1="940.6" y1="1251" x2="940.6" y2="1259" stroke="#a0a0a0" stroke-width="1.5"/><line x1="1002.3" y1="1251" x2="1002.3" y2="1259" stroke="#a0a0a0" stroke-width="1.5"/><line x1="1064.0" y1="1251" x2="1064.0" y2="1259" stroke="#a0a0a0" stroke-width="1.5"/><line x1="1125.7" y1="1251" x2="1125.7" y2="1259" stroke="#a0a0a0" stroke-width="1.5"/><line x1="1187.4" y1="1251" x2="1187.4" y2="1259" stroke="#a0a0a0" stroke-width="1.5"/><line x1="1249.0" y1="1251" x2="1249.0" y2="1259" stroke="#a0a0a0" stroke-width="1.5"/><line x1="1310.7" y1="1251" x2="1310.7" y2="1259" stroke="#a0a0a0" stroke-width="1.5"/><line x1="1372.4" y1="1251" x2="1372.4" y2="1259" stroke="#a0a0a0" stroke-width="1.5"/><line x1="1434.1" y1="1251" x2="1434.1" y2="1259" stroke="#a0a0a0" stroke-width="1.5"/><line x1="1495.8" y1="1251" x2="1495.8" y2="1259" stroke="#a0a0a0" stroke-width="1.5"/><line x1="1557.4" y1="1251" x2="1557.4" y2="1259" stroke="#a0a0a0" stroke-width="1.5"/><line x1="1619.1" y1="1251" x2="1619.1" y2="1259" stroke="#a0a0a0" stroke-width="1.5"/><line x1="1680.8" y1="1251" x2="1680.8" y2="1259" stroke="#a0a0a0" stroke-width="1.5"/><line x1="1742.5" y1="1251" x2="1742.5" y2="1259" stroke="#a0a0a0" stroke-width="1.5"/><line x1="1804.2" y1="1251" x2="1804.2" y2="1259" stroke="#a0a0a0" stroke-width="1.5"/><line x1="1865.8" y1="1251" x2="1865.8" y2="1259" stroke="#a0a0a0" stroke-width="1.5"/><line x1="1927.5" y1="1251" x2="1927.5" y2="1259" stroke="#a0a0a0" stroke-width="1.5"/><line x1="1989.2" y1="1251" x2="1989.2" y2="1259" stroke="#a0a0a0" stroke-width="1.5"/><line x1="2050.9" y1="1251" x2="2050.9" y2="1259" stroke="#a0a0a0" stroke-width="1.5"/><line x1="2112.6" y1="1251" x2="2112.6" y2="1259" stroke="#a0a0a0" stroke-width="1.5"/><line x1="2174.2" y1="1251" x2="2174.2" y2="1259" stroke="#a0a0a0" stroke-width="1.5"/><line x1="2235.9" y1="1251" x2="2235.9" y2="1259" stroke="#a0a0a0" stroke-width="1.5"/><line x1="2297.6" y1="1251" x2="2297.6" y2="1259" stroke="#a0a0a0" stroke-width="1.5"/><line x1="2359.3" y1="1251" x2="2359.3" y2="1259" stroke="#a0a0a0" stroke-width="1.5"/></svg><div id="t74" class="t " style="left:429.0px;top:1234.2px;font-size:17px;transform:scaleX(1.0280);color:#111111">0€</div>
<div id="t75" class="t " style="left:429.0px;top:1179.6px;font-size:17px;transform:scaleX(1.0585);color:#111111">50€</div>
<div id="t76" class="t " style="left:427.9px;top:1125.0px;font-size:17px;transform:scaleX(1.1053);color:#111111">100€</div>
<div id="t77" class="t " style="left:427.9px;top:1070.4px;font-size:17px;transform:scaleX(1.1053);color:#111111">150€</div>
<div id="t78" class="t " style="left:429.0px;top:1015.8px;font-size:17px;transform:scaleX(1.0765);color:#111111">200€</div>
<div id="t79" class="t " style="left:429.0px;top:961.2px;font-size:17px;transform:scaleX(1.0765);color:#111111">250€</div>
<div id="t80" class="t " style="left:429.0px;top:906.6px;font-size:17px;transform:scaleX(1.0765);color:#111111">300€</div>
<div id="t81" class="t " style="left:429.0px;top:852.0px;font-size:17px;transform:scaleX(1.0765);color:#111111">350€</div>
<div id="t82" class="t " style="left:2350.6px;top:1235.3px;font-size:17px;transform:scaleX(1.1088);color:#111111">0.0</div>
<div id="t83" class="t " style="left:2350.6px;top:1147.6px;font-size:17px;transform:scaleX(1.1088);color:#111111">0.5</div>
<div id="t84" class="t " style="left:2349.4px;top:1059.9px;font-size:17px;transform:scaleX(1.1588);color:#111111">1.0</div>
<div id="t85" class="t " style="left:2349.4px;top:972.2px;font-size:17px;transform:scaleX(1.1588);color:#111111">1.5</div>
<div id="t86" class="t " style="left:2350.6px;top:884.5px;font-size:17px;transform:scaleX(1.1088);color:#111111">2.0</div>
<div class="abs" style="left:399px;top:1252px;width:2056px;height:120px;overflow:hidden"><div style="position:absolute;right:2006.8px;top:3.599999999999909px;height:20px;line-height:20px;font-size:19.3px;color:#111111;white-space:nowrap;transform-origin:100% 50%;transform:rotate(-45deg)">2025-01-10</div><div style="position:absolute;right:1945.1px;top:3.599999999999909px;height:20px;line-height:20px;font-size:19.3px;color:#111111;white-space:nowrap;transform-origin:100% 50%;transform:rotate(-45deg)">2025-01-11</div><div style="position:absolute;right:1883.4px;top:3.599999999999909px;height:20px;line-height:20px;font-size:19.3px;color:#111111;white-space:nowrap;transform-origin:100% 50%;transform:rotate(-45deg)">2025-01-12</div><div style="position:absolute;right:1821.8px;top:3.599999999999909px;height:20px;line-height:20px;font-size:19.3px;color:#111111;white-space:nowrap;transform-origin:100% 50%;transform:rotate(-45deg)">2025-01-13</div><div style="position:absolute;right:1760.1px;top:3.599999999999909px;height:20px;line-height:20px;font-size:19.3px;color:#111111;white-space:nowrap;transform-origin:100% 50%;transform:rotate(-45deg)">2025-01-14</div><div style="position:absolute;right:1698.4px;top:3.599999999999909px;height:20px;line-height:20px;font-size:19.3px;color:#111111;white-space:nowrap;transform-origin:100% 50%;transform:rotate(-45deg)">2025-01-15</div><div style="position:absolute;right:1636.7px;top:3.599999999999909px;height:20px;line-height:20px;font-size:19.3px;color:#111111;white-space:nowrap;transform-origin:100% 50%;transform:rotate(-45deg)">2025-01-16</div><div style="position:absolute;right:1575.0px;top:3.599999999999909px;height:20px;line-height:20px;font-size:19.3px;color:#111111;white-space:nowrap;transform-origin:100% 50%;transform:rotate(-45deg)">2025-01-17</div><div style="position:absolute;right:1513.4px;top:3.599999999999909px;height:20px;line-height:20px;font-size:19.3px;color:#111111;white-space:nowrap;transform-origin:100% 50%;transform:rotate(-45deg)">2025-01-18</div><div style="position:absolute;right:1451.7px;top:3.599999999999909px;height:20px;line-height:20px;font-size:19.3px;color:#111111;white-space:nowrap;transform-origin:100% 50%;transform:rotate(-45deg)">2025-01-19</div><div style="position:absolute;right:1390.0px;top:3.599999999999909px;height:20px;line-height:20px;font-size:19.3px;color:#111111;white-space:nowrap;transform-origin:100% 50%;transform:rotate(-45deg)">2025-01-20</div><div style="position:absolute;right:1328.3px;top:3.599999999999909px;height:20px;line-height:20px;font-size:19.3px;color:#111111;white-space:nowrap;transform-origin:100% 50%;transform:rotate(-45deg)">2025-01-21</div><div style="position:absolute;right:1266.6px;top:3.599999999999909px;height:20px;line-height:20px;font-size:19.3px;color:#111111;white-space:nowrap;transform-origin:100% 50%;transform:rotate(-45deg)">2025-01-22</div><div style="position:absolute;right:1205.0px;top:3.599999999999909px;height:20px;line-height:20px;font-size:19.3px;color:#111111;white-space:nowrap;transform-origin:100% 50%;transform:rotate(-45deg)">2025-01-23</div><div style="position:absolute;right:1143.3px;top:3.599999999999909px;height:20px;line-height:20px;font-size:19.3px;color:#111111;white-space:nowrap;transform-origin:100% 50%;transform:rotate(-45deg)">2025-01-24</div><div style="position:absolute;right:1081.6px;top:3.599999999999909px;height:20px;line-height:20px;font-size:19.3px;color:#111111;white-space:nowrap;transform-origin:100% 50%;transform:rotate(-45deg)">2025-01-25</div><div style="position:absolute;right:1019.9px;top:3.599999999999909px;height:20px;line-height:20px;font-size:19.3px;color:#111111;white-space:nowrap;transform-origin:100% 50%;transform:rotate(-45deg)">2025-01-26</div><div style="position:absolute;right:958.2px;top:3.599999999999909px;height:20px;line-height:20px;font-size:19.3px;color:#111111;white-space:nowrap;transform-origin:100% 50%;transform:rotate(-45deg)">2025-01-27</div><div style="position:absolute;right:896.6px;top:3.599999999999909px;height:20px;line-height:20px;font-size:19.3px;color:#111111;white-space:nowrap;transform-origin:100% 50%;transform:rotate(-45deg)">2025-01-28</div><div style="position:absolute;right:834.9px;top:3.599999999999909px;height:20px;line-height:20px;font-size:19.3px;color:#111111;white-space:nowrap;transform-origin:100% 50%;transform:rotate(-45deg)">2025-01-29</div><div style="position:absolute;right:773.2px;top:3.599999999999909px;height:20px;line-height:20px;font-size:19.3px;color:#111111;white-space:nowrap;transform-origin:100% 50%;transform:rotate(-45deg)">2025-01-30</div><div style="position:absolute;right:711.5px;top:3.599999999999909px;height:20px;line-height:20px;font-size:19.3px;color:#111111;white-space:nowrap;transform-origin:100% 50%;transform:rotate(-45deg)">2025-01-31</div><div style="position:absolute;right:649.8px;top:3.599999999999909px;height:20px;line-height:20px;font-size:19.3px;color:#111111;white-space:nowrap;transform-origin:100% 50%;transform:rotate(-45deg)">2025-02-01</div><div style="position:absolute;right:588.2px;top:3.599999999999909px;height:20px;line-height:20px;font-size:19.3px;color:#111111;white-space:nowrap;transform-origin:100% 50%;transform:rotate(-45deg)">2025-02-02</div><div style="position:absolute;right:526.5px;top:3.599999999999909px;height:20px;line-height:20px;font-size:19.3px;color:#111111;white-space:nowrap;transform-origin:100% 50%;transform:rotate(-45deg)">2025-02-03</div><div style="position:absolute;right:464.8px;top:3.599999999999909px;height:20px;line-height:20px;font-size:19.3px;color:#111111;white-space:nowrap;transform-origin:100% 50%;transform:rotate(-45deg)">2025-02-04</div><div style="position:absolute;right:403.1px;top:3.599999999999909px;height:20px;line-height:20px;font-size:19.3px;color:#111111;white-space:nowrap;transform-origin:100% 50%;transform:rotate(-45deg)">2025-02-05</div><div style="position:absolute;right:341.4px;top:3.599999999999909px;height:20px;line-height:20px;font-size:19.3px;color:#111111;white-space:nowrap;transform-origin:100% 50%;transform:rotate(-45deg)">2025-02-06</div><div style="position:absolute;right:279.8px;top:3.599999999999909px;height:20px;line-height:20px;font-size:19.3px;color:#111111;white-space:nowrap;transform-origin:100% 50%;transform:rotate(-45deg)">2025-02-07</div><div style="position:absolute;right:218.1px;top:3.599999999999909px;height:20px;line-height:20px;font-size:19.3px;color:#111111;white-space:nowrap;transform-origin:100% 50%;transform:rotate(-45deg)">2025-02-08</div><div style="position:absolute;right:156.4px;top:3.599999999999909px;height:20px;line-height:20px;font-size:19.3px;color:#111111;white-space:nowrap;transform-origin:100% 50%;transform:rotate(-45deg)">2025-02-09</div><div style="position:absolute;right:94.7px;top:3.599999999999909px;height:20px;line-height:20px;font-size:19.3px;color:#111111;white-space:nowrap;transform-origin:100% 50%;transform:rotate(-45deg)">2025-02-10</div></div><div class="abs" style="left:415px;top:1388px;width:26px;height:26px;background:#306fa3"></div><div id="t87" class="t " style="left:446.9px;top:1393.6px;font-size:17px;transform:scaleX(1.0618);color:#111111">Conversions</div>
<div class="abs" style="left:610px;top:1388px;width:26px;height:26px;background:#bcab67"></div><div id="t88" class="t " style="left:640.9px;top:1393.6px;font-size:17px;transform:scaleX(1.1369);color:#111111">Kosten/Conv. [€]</div>
<div class="abs" style="left:2363px;top:832px;width:45px;height:45px;border-radius:6px;background:#283445"></div><svg width="24" height="24" style="left:2374px;top:843px"><path d="M12 2 L12 13 M7 8.5 L12 13.5 L17 8.5" fill="none" stroke="#fff" stroke-width="2.6"/><path d="M2 14 L8 14 L12 17 L16 14 L22 14 L22 20.5 L2 20.5 Z" fill="#fff"/><circle cx="18.5" cy="17.8" r="1" fill="#e05050"/></svg><div class="abs" style="left:2333px;top:1367px;width:75px;height:75px;border-radius:50%;background:#283445"></div><svg width="40" height="34" style="left:2351px;top:1389px"><path d="M19 2 C29 2 36 8 36 15.5 C36 23 29 29 19 29 C16.5 29 14.5 28.6 12.5 28 L4 32 L6.5 25 C3.5 22.5 2 19.3 2 15.5 C2 8 9 2 19 2 Z" fill="#fff"/><circle cx="11.5" cy="15.5" r="2.3" fill="#283445"/><circle cx="19" cy="15.5" r="2.3" fill="#283445"/><circle cx="26.5" cy="15.5" r="2.3" fill="#283445"/></svg>
</body></html>
